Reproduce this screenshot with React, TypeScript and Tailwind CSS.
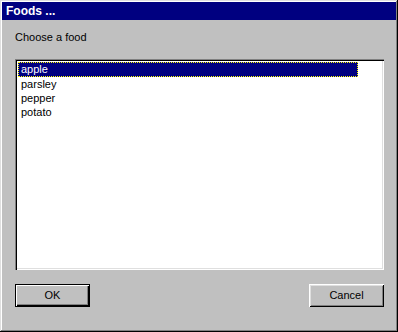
import React from "react";

const items = ["apple", "parsley", "pepper", "potato"];

export default function App() {
  return (
    <div
      className="w-[398px] h-[332px] bg-[#c0c0c0] p-[2px] flex flex-col shadow-[inset_-1px_-1px_#000,inset_1px_1px_#dfdfdf,inset_-2px_-2px_#808080,inset_2px_2px_#fff]"
      style={{ fontFamily: '"Liberation Sans", Arial, sans-serif' }}
    >
      <div className="h-[18px] bg-[#000080] text-white font-bold text-[12px] leading-[18px] pl-[4px]">
        Foods ...
      </div>
      <div className="flex flex-col pl-[13px] pr-[12px]">
        <div className="mt-[10px] h-[14px] text-[11px] leading-[14px] text-black">
          Choose a food
        </div>
        <div className="mt-[15px] h-[211px] w-[369px] bg-white pt-[3px] pl-[3px] shadow-[inset_1px_1px_#808080,inset_2px_2px_#000,inset_-1px_-1px_#fff,inset_-2px_-2px_#dfdfdf]">
          {items.map((it, i) => (
            <div
              key={it}
              className={
                i === 0
                  ? "w-[340px] h-[15px] text-[11px] leading-[13px] pl-[2px] bg-[#000080] text-white border border-dotted border-[#ffff00]"
                  : "w-[340px] h-[14px] text-[11px] leading-[14px] pl-[3px] text-black"
              }
            >
              {it}
            </div>
          ))}
        </div>
        <div className="mt-[14px] flex justify-between">
          <button className="w-[75px] h-[23px] bg-[#c0c0c0] border border-black text-[11px] text-black shadow-[inset_1px_1px_#fff,inset_-1px_-1px_#000,inset_-2px_-2px_#808080]">
            OK
          </button>
          <button className="w-[75px] h-[23px] bg-[#c0c0c0] text-[11px] text-black shadow-[inset_1px_1px_#fff,inset_-1px_-1px_#000,inset_2px_2px_#dfdfdf,inset_-2px_-2px_#808080]">
            Cancel
          </button>
        </div>
      </div>
    </div>
  );
}
